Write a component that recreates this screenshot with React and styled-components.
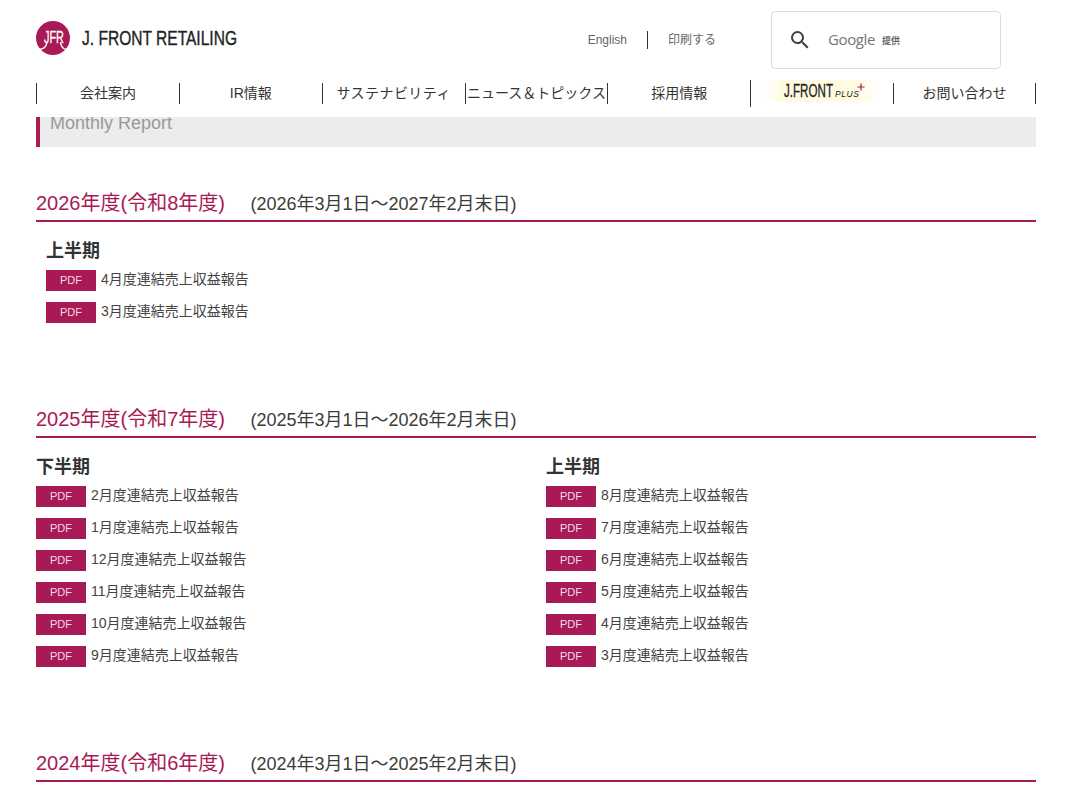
import React from 'react';
import styled, { createGlobalStyle } from 'styled-components';

const GlobalStyle = createGlobalStyle`
  html, body {
    margin: 0;
    padding: 0;
    background: #fff;
    color: #333;
    font-family: "Liberation Sans", "Noto Sans CJK JP", sans-serif;
  }
`;

const Page = styled.div`
  width: 1000px;
  height: 800px;
  margin-left: 36px;
  overflow: hidden;
`;

const Header = styled.header`
  display: flex;
  justify-content: space-between;
  height: 83px;
`;

const Brand = styled.a`
  display: flex;
  align-items: center;
  gap: 12px;
  height: 75px;
`;

const Utility = styled.div`
  display: flex;
  align-items: center;
  height: 58px;
  margin-top: 11px;
  margin-right: 35px;
`;

const UtilLink = styled.a`
  font-size: 12px;
  color: #666;
  line-height: 18px;
`;

const UtilDivider = styled.span`
  width: 1px;
  height: 18px;
  background: #333;
  margin: 0 20px;
`;

const SearchBox = styled.div`
  display: flex;
  align-items: center;
  box-sizing: border-box;
  width: 230px;
  height: 58px;
  margin-left: 55px;
  padding-left: 16px;
  border: 1px solid #dadce0;
  border-radius: 4px;
`;

const GoogleWord = styled.span`
  margin-left: 16px;
  padding-bottom: 2px;
  font-family: "Open Sans", sans-serif;
  font-size: 15px;
  color: #757575;
  letter-spacing: -0.4px;
`;

const Provided = styled.span`
  margin-left: 7px;
  font-size: 9px;
  font-weight: bold;
  color: #666;
`;

const Nav = styled.nav`
  display: grid;
  grid-template-columns: repeat(7, 1fr);
  height: 34px;
`;

const NavItem = styled.a`
  display: flex;
  align-items: center;
  justify-content: center;
  min-width: 0;
  height: 21px;
  padding-bottom: 3px;
  box-sizing: border-box;
  border-left: 1px solid #333;
  border-right: ${(p) => (p.$last ? '1px solid #333' : 'none')};
  font-size: 14px;
  color: #333;
  white-space: nowrap;
`;

const NavWide = styled(NavItem)`
  letter-spacing: 0.45px;
`;

const NavBanner = styled(NavItem)`
  align-items: flex-start;
  justify-content: flex-start;
  padding: 0 0 0 16px;
  margin-top: -3px;
  height: 27px;
`;

const PlusLogo = styled.svg`
  display: block;
  width: 108px;
  height: 22px;
`;

const TitleBand = styled.div`
  box-sizing: border-box;
  height: 30px;
  overflow: hidden;
  padding-left: 10px;
  background: #ececec;
  border-left: 4px solid #a81a56;
`;

const PageTitle = styled.h1`
  margin: -3px 0 0;
  font-size: 18px;
  font-weight: normal;
  line-height: 18px;
  color: #999;
`;

const Section = styled.section`
  margin-top: ${(p) => p.$top}px;
`;

const YearHeading = styled.div`
  display: flex;
  align-items: baseline;
  gap: 25.5px;
  height: 35px;
  box-sizing: border-box;
  padding-top: 2px;
  border-bottom: 2px solid #a81a56;
`;

const YearTitle = styled.h2`
  margin: 0;
  font-size: 20px;
  font-weight: normal;
  line-height: 28px;
  color: #a81a56;
`;

const YearRange = styled.span`
  font-size: 18px;
  line-height: 28px;
  color: #3c3c3c;
`;

const Columns = styled.div`
  display: grid;
  grid-template-columns: 510px 490px;
  padding-top: 17px;
`;

const Column = styled.div`
  padding-left: ${(p) => (p.$inset ? '10px' : '0')};
`;

const Half = styled.h3`
  margin: 0 0 7px;
  font-size: 18px;
  font-weight: bold;
  line-height: 24px;
  color: #333;
`;

const ReportList = styled.ul`
  display: flex;
  flex-direction: column;
  gap: 11px;
  margin: 0;
  padding: 0;
  list-style: none;
`;

const Report = styled.li`
  display: flex;
  align-items: center;
  gap: 5px;
  height: 21px;
  font-size: 14px;
  color: #444;
`;

const PdfTag = styled.span`
  width: 50px;
  height: 21px;
  line-height: 21px;
  text-align: center;
  background: #a81a56;
  color: #f3dbe4;
  font-size: 11px;
`;

const ReportText = styled.span`
  position: relative;
  top: -3px;
`;

const JfrLogo = () => (
  <svg width="34" height="34" viewBox="0 0 34 34" style={{ display: 'block' }}>
    <circle cx="17" cy="17" r="17" fill="#a81a56" />
    <text x="18" y="22" textAnchor="middle" fill="#fff" stroke="#fff" strokeWidth="0.3" fontFamily="Liberation Sans" fontSize="17" textLength="20" lengthAdjust="spacingAndGlyphs">JFR</text>
    <path d="M11 21 C10.5 25.5 7.5 28 3.5 28.5 M24.5 21 C25 25.5 27 28 30.5 28.5" stroke="#fff" strokeWidth="1.5" fill="none" />
  </svg>
);

const Wordmark = () => (
  <svg width="156" height="24" viewBox="0 0 156 24" style={{ display: 'block' }}>
    <text x="0" y="19" fill="#222" stroke="#222" strokeWidth="0.35" fontFamily="Liberation Sans" fontSize="20" textLength="155" lengthAdjust="spacingAndGlyphs">J. FRONT RETAILING</text>
  </svg>
);

const SearchIcon = () => (
  <svg width="24" height="24" viewBox="0 0 24 24" fill="#3c4043">
    <path d="M15.5 14h-.79l-.28-.27A6.47 6.47 0 0 0 16 9.5 6.5 6.5 0 1 0 9.5 16c1.61 0 3.09-.59 4.23-1.57l.27.28v.79l5 4.99L20.49 19l-4.99-5zm-6 0C7.01 14 5 11.99 5 9.5S7.01 5 9.5 5 14 7.01 14 9.5 11.99 14 9.5 14z" />
  </svg>
);

const PlusBanner = () => (
  <PlusLogo viewBox="0 0 108 22">
    <defs>
      <linearGradient id="cream" x1="0" x2="1" y1="0" y2="0">
        <stop offset="0" stopColor="#fffde8" stopOpacity="0.3" />
        <stop offset="0.15" stopColor="#fffbe0" />
        <stop offset="0.85" stopColor="#fffbe0" />
        <stop offset="1" stopColor="#fffde8" stopOpacity="0.3" />
      </linearGradient>
    </defs>
    <rect width="108" height="22" fill="url(#cream)" />
    <text x="17" y="17" fill="#222" stroke="#222" strokeWidth="0.3" fontFamily="Liberation Sans" fontSize="18" textLength="49" lengthAdjust="spacingAndGlyphs">J.FRONT</text>
    <text x="68" y="17" fill="#222" fontFamily="Liberation Sans" fontStyle="italic" fontSize="8.5" letterSpacing="0.6">PLUS</text>
    <path d="M90.5 7h7M94 3.5v7" stroke="#a81a56" strokeWidth="1.2" />
  </PlusLogo>
);

const Reports = ({ half, months, inset }) => (
  <Column $inset={inset}>
    <Half>{half}</Half>
    <ReportList>
      {months.map((m) => (
        <Report key={m}>
          <PdfTag>PDF</PdfTag>
          <ReportText>{m}月度連結売上収益報告</ReportText>
        </Report>
      ))}
    </ReportList>
  </Column>
);

const YearHead = ({ title, range }) => (
  <YearHeading>
    <YearTitle>{title}</YearTitle>
    <YearRange>{range}</YearRange>
  </YearHeading>
);

export default function App() {
  return (
    <Page>
      <GlobalStyle />
      <Header>
        <Brand>
          <JfrLogo />
          <Wordmark />
        </Brand>
        <Utility>
          <UtilLink>English</UtilLink>
          <UtilDivider />
          <UtilLink>印刷する</UtilLink>
          <SearchBox>
            <SearchIcon />
            <GoogleWord>Google</GoogleWord>
            <Provided>提供</Provided>
          </SearchBox>
        </Utility>
      </Header>
      <Nav>
        <NavItem>会社案内</NavItem>
        <NavItem>IR情報</NavItem>
        <NavWide>サステナビリティ</NavWide>
        <NavItem>ニュース＆トピックス</NavItem>
        <NavItem>採用情報</NavItem>
        <NavBanner><PlusBanner /></NavBanner>
        <NavItem $last>お問い合わせ</NavItem>
      </Nav>
      <TitleBand>
        <PageTitle>Monthly Report</PageTitle>
      </TitleBand>

      <Section $top={40}>
        <YearHead title="2026年度(令和8年度)" range="(2026年3月1日～2027年2月末日)" />
        <Columns>
          <Reports inset half="上半期" months={[4, 3]} />
        </Columns>
      </Section>

      <Section $top={80}>
        <YearHead title="2025年度(令和7年度)" range="(2025年3月1日～2026年2月末日)" />
        <Columns>
          <Reports half="下半期" months={[2, 1, 12, 11, 10, 9]} />
          <Reports half="上半期" months={[8, 7, 6, 5, 4, 3]} />
        </Columns>
      </Section>

      <Section $top={80}>
        <YearHead title="2024年度(令和6年度)" range="(2024年3月1日～2025年2月末日)" />
      </Section>
    </Page>
  );
}
